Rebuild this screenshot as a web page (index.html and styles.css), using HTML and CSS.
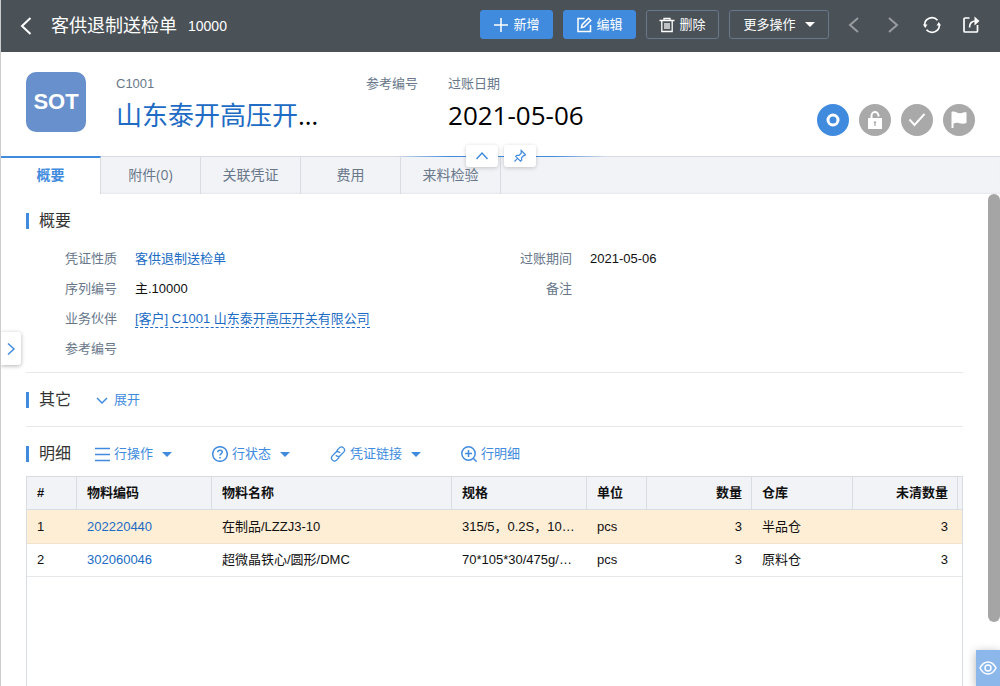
FILE: index.html
```html
<!DOCTYPE html>
<html lang="zh-CN">
<head>
    <meta charset="UTF-8">
    <meta name="viewport" content="width=device-width, initial-scale=1.0">
    <title>客供退制送检单 10000</title>
    <link rel="stylesheet" href="styles.css">
</head>
<body>
    <!-- Top bar -->
    <header class="topbar">
        <button type="button" class="icon-btn back" aria-label="返回">
            <svg width="12" height="18" viewBox="0 0 12 18"><path d="M10.500 1 2 9l8.500 8" /></svg>
        </button>
        <h1 class="title">客供退制送检单</h1>
        <span class="doc-no">10000</span>

        <div class="actions">
            <button type="button" class="btn btn-primary">
                <svg width="16" height="16" viewBox="0 0 16 16"><path d="M8 1v14M1 8h14" /></svg>新增
            </button>
            <button type="button" class="btn btn-primary">
                <svg width="16" height="16" viewBox="0 0 16 16"><path d="M8.500 1.500H2v13h12.500V8M5.500 10.500l.6-2.800 6.400-6.400 2.200 2.200-6.400 6.400z" /></svg>编辑
            </button>
            <button type="button" class="btn">
                <svg width="16" height="16" viewBox="0 0 16 16"><path d="M.5 3.500h15M5 3.500v-2h6v2M2.800 3.500v11h10.400v-11M6 6v6M8 6v6M10 6v6" stroke-width="1.300" /></svg>删除
            </button>
            <button type="button" class="btn btn-more">更多操作<span class="caret"></span></button>
        </div>

        <div class="nav-icons">
            <button type="button" class="icon-btn dim" aria-label="上一张">
                <svg width="16" height="16" viewBox="0 0 16 16"><path d="M12 1 4 8l8 7" /></svg>
            </button>
            <button type="button" class="icon-btn dim" aria-label="下一张">
                <svg width="16" height="16" viewBox="0 0 16 16"><path d="m4 1 8 7-8 7" /></svg>
            </button>
            <button type="button" class="icon-btn" aria-label="刷新">
                <svg width="18" height="18" viewBox="0 0 18 18"><path d="M1.700 9.500A7.300 7.300 0 0 1 14.500 4.200M16.300 8.500A7.300 7.300 0 0 1 3.500 13.800" stroke-width="1.700" /><path class="fill" d="M0 8.500h4.500L2.200 12zM18 9.500h-4.500L15.800 6z" /></svg>
            </button>
            <button type="button" class="icon-btn" aria-label="分享">
                <svg width="18" height="18" viewBox="0 0 18 18"><path d="M7.500 2H3Q2 2 2 3v12q0 1 1 1h11.500q1 0 1-1V9M7.500 11.500C7.500 7 9.500 5 14 5" stroke-width="1.700" /><path class="fill" d="m12.500.5 5 4.500-5 4.500z" /></svg>
            </button>
        </div>
    </header>

    <!-- Document summary -->
    <section class="summary">
        <div class="logo">SOT</div>
        <div class="info partner">
            <div class="info-label">C1001</div>
            <div class="info-value"><a href="#partner">山东泰开高压开关有限公司</a></div>
        </div>
        <div class="info">
            <div class="info-label">参考编号</div>
        </div>
        <div class="info">
            <div class="info-label">过账日期</div>
            <div class="info-value">2021-05-06</div>
        </div>
        <div class="states">
            <span class="state on"><svg width="16" height="16" viewBox="0 0 16 16"><circle cx="8" cy="8" r="5" stroke-width="3" /></svg></span>
            <span class="state"><svg width="16" height="20" viewBox="0 0 16 20"><path d="M4.500 9V6a3.500 3.700 0 0 1 7-.5v1" stroke-width="2" /><path class="fill" fill-rule="evenodd" d="M1 8h14v11H1zM8 11.200a1.200 1.200 0 0 0-.6 2.200V16h1.200v-2.600A1.200 1.200 0 0 0 8 11.200z" /></svg></span>
            <span class="state"><svg width="18" height="16" viewBox="0 0 18 16"><path d="m1.500 7.500 5 5.500 10-11" stroke-width="2" /></svg></span>
            <span class="state"><svg width="18" height="18" viewBox="0 0 18 18"><path class="fill" d="M1.500 1C5-.5 7 2.800 10.500 2.200 13 2 14.500 1 16.500 1.500V12c-3 1-5 .8-7 .2-2.500-.8-4-.4-6 .3V17h-2z" /></svg></span>
        </div>
        <div class="fold">
            <button type="button" aria-label="收起"><svg width="14" height="14" viewBox="0 0 14 14"><path d="M1.500 10 7 4l5.500 6" /></svg></button>
            <button type="button" aria-label="固定"><svg width="14" height="14" viewBox="0 0 14 14"><path d="m8.200 1.500 4.300 4.300-1 .9-.8-.2-2.200 2.300.2 2.300-1.200 1-4.800-4.800 1.100-1 2.200.1 2.300-2.200-.2-.8zM4.800 9.200 1.500 12.500" stroke-width="1.200" /></svg></button>
        </div>
    </section>

    <!-- Tabs -->
    <nav class="tabs">
        <a href="#summary" class="tab active">概要</a>
        <a href="#files" class="tab">附件(0)</a>
        <a href="#related" class="tab">关联凭证</a>
        <a href="#cost" class="tab">费用</a>
        <a href="#inspection" class="tab">来料检验</a>
    </nav>

    <main class="content">
        <!-- Summary section -->
        <section class="block">
            <div class="block-head"><h2>概要</h2></div>
            <div class="fields">
                <dl>
                    <dt>凭证性质</dt><dd><a href="#type">客供退制送检单</a></dd>
                    <dt>序列编号</dt><dd>主.10000</dd>
                    <dt>业务伙伴</dt><dd><a href="#partner" class="dashed">[客户] C1001 山东泰开高压开关有限公司</a></dd>
                    <dt>参考编号</dt><dd></dd>
                </dl>
                <dl>
                    <dt>过账期间</dt><dd>2021-05-06</dd>
                    <dt>备注</dt><dd></dd>
                </dl>
            </div>
        </section>

        <!-- Other section -->
        <section class="block">
            <div class="block-head">
                <h2>其它</h2>
                <button type="button" class="link-btn"><svg width="16" height="16" viewBox="0 0 16 16"><path d="m3 6 5 5 5-5" /></svg>展开</button>
            </div>
        </section>

        <!-- Detail lines -->
        <section class="block detail">
            <div class="block-head">
                <h2>明细</h2>
                <div class="tools">
                    <button type="button" class="link-btn"><svg width="16" height="16" viewBox="0 0 16 16"><path d="M1 2.500h15M1 8.500h15M1 14.500h15" /></svg>行操作<span class="caret"></span></button>
                    <button type="button" class="link-btn"><svg width="16" height="16" viewBox="0 0 16 16"><circle cx="8" cy="8" r="7.300" /><path d="M5.800 6.300c0-3 4.500-2.700 4.500-.2C10.300 7.700 8 7.700 8 9.600M8 11v1.500" /></svg>行状态<span class="caret"></span></button>
                    <button type="button" class="link-btn"><svg width="16" height="16" viewBox="0 0 16 16"><path d="m6.600 4.700 2.800-2.800c2.700-2.600 6.900 1.200 4.300 4.200l-3.500 3.600c-1.400 1.400-3.600.9-4.300-.8M9.400 11.300l-2.800 2.800c-2.700 2.600-6.900-1.200-4.300-4.200l3.500-3.600c1.400-1.400 3.600-.9 4.300.8" stroke-width="1.300" /></svg>凭证链接<span class="caret"></span></button>
                    <button type="button" class="link-btn"><svg width="16" height="16" viewBox="0 0 16 16"><circle cx="7.500" cy="7.500" r="6.700" /><path d="M7.500 4v7M4 7.500h7M12.200 12.200l3.500 3.500" /></svg>行明细</button>
                </div>
            </div>
            <div class="grid">
                <table>
                    <colgroup>
                        <col class="w-no"><col class="w-code"><col><col class="w-code"><col class="w-unit"><col class="w-qty"><col class="w-store"><col class="w-qty"><col class="w-end">
                    </colgroup>
                    <thead>
                        <tr>
                            <th>#</th>
                            <th>物料编码</th>
                            <th>物料名称</th>
                            <th>规格</th>
                            <th>单位</th>
                            <th class="num">数量</th>
                            <th>仓库</th>
                            <th class="num">未清数量</th>
                            <th class="end"></th>
                        </tr>
                    </thead>
                    <tbody>
                        <tr class="selected">
                            <td>1</td>
                            <td><a href="#202220440">202220440</a></td>
                            <td>在制品/LZZJ3-10</td>
                            <td>315/5，0.2S，10P10</td>
                            <td>pcs</td>
                            <td class="num">3</td>
                            <td>半品仓</td>
                            <td class="num">3</td>
                            <td class="end"></td>
                        </tr>
                        <tr>
                            <td>2</td>
                            <td><a href="#302060046">302060046</a></td>
                            <td>超微晶铁心/圆形/DMC</td>
                            <td>70*105*30/475g/DMC</td>
                            <td>pcs</td>
                            <td class="num">3</td>
                            <td>原料仓</td>
                            <td class="num">3</td>
                            <td class="end"></td>
                        </tr>
                    </tbody>
                </table>
            </div>
        </section>

        <div class="scroll-thumb"></div>
    </main>

    <button type="button" class="side-toggle" aria-label="展开侧栏"><svg width="12" height="14" viewBox="0 0 12 14"><path d="m3 1.500 6 5.500-6 5.500" /></svg></button>
    <button type="button" class="eye" aria-label="预览"><svg width="18" height="14" viewBox="0 0 18 14"><path d="M1 7c4-8 12-8 16 0-4 8-12 8-16 0z" /><circle cx="9" cy="7" r="3" /></svg></button>
</body>
</html>
```
FILE: styles.css
```css
* {
    box-sizing: border-box;
}

body {
    margin: 0;
    min-height: 100vh;
    display: flex;
    flex-direction: column;
    position: relative;
    border-left: 1px solid #ccc;
    background: #fff;
    color: #111;
    font: 13px/20px "Liberation Sans", "Noto Sans CJK SC", sans-serif;
}

a {
    color: #206bc4;
    text-decoration: none;
}

button {
    font: inherit;
    cursor: pointer;
}

svg {
    display: block;
    flex: none;
    fill: none;
    stroke: currentColor;
    stroke-width: 1.5;
}

svg .fill {
    fill: currentColor;
    stroke: none;
}

.caret {
    border: 5px solid transparent;
    border-top-color: currentColor;
    border-bottom: 0;
}

/* Top bar */
.topbar {
    display: flex;
    align-items: center;
    height: 52px;
    padding: 0 20px 0 19px;
    background: #4a5157;
    color: #fff;
}

.icon-btn {
    padding: 0;
    border: 0;
    background: none;
    color: #fff;
}

.icon-btn svg {
    stroke-width: 2;
}

.icon-btn.dim {
    color: #999c9f;
}

.title {
    margin: 0 11px 0 19px;
    font-size: 18px;
    font-weight: 400;
    line-height: 24px;
}

.doc-no {
    font-size: 14px;
}

.actions {
    display: flex;
    gap: 10px;
    margin-left: auto;
    padding-bottom: 3px;
}

.btn {
    display: flex;
    align-items: center;
    justify-content: center;
    gap: 4px;
    width: 73px;
    height: 29px;
    padding: 0;
    border: 1px solid #66788a;
    border-radius: 3px;
    background: transparent;
    color: #fff;
}

.btn-primary {
    border-color: #418bde;
    background: #418bde;
}

.btn-more {
    width: 100px;
    gap: 9px;
}

.nav-icons {
    display: flex;
    gap: 21px;
    margin-left: 16px;
    padding-bottom: 2px;
}

.nav-icons .icon-btn {
    display: flex;
    align-items: center;
    justify-content: center;
    width: 18px;
}

/* Document summary */
.summary {
    display: flex;
    gap: 30px;
    position: relative;
    height: 104px;
    padding: 20px 25px;
}

.logo {
    width: 60px;
    height: 60px;
    border-radius: 10px;
    background: #6790cd;
    color: #fff;
    font-size: 22px;
    font-weight: 700;
    line-height: 60px;
    text-align: center;
}

.info-label {
    height: 24px;
    line-height: 24px;
    color: #68778a;
}

.info-value {
    overflow: hidden;
    color: #000;
    font-family: "Open Sans", "Noto Sans CJK SC", sans-serif;
    font-size: 26px;
    line-height: 38px;
    text-overflow: ellipsis;
    white-space: nowrap;
}

.partner {
    width: 220px;
}

.states {
    display: flex;
    align-items: center;
    gap: 10px;
    margin-left: auto;
    padding-top: 32px;
}

.state {
    display: flex;
    align-items: center;
    justify-content: center;
    width: 32px;
    height: 32px;
    border-radius: 50%;
    background: #a9a9a9;
    color: #fff;
}

.state.on {
    background: #418bde;
}

/* Fold and pin buttons sit over the tab border */
.fold {
    display: flex;
    justify-content: center;
    gap: 6px;
    position: absolute;
    z-index: 1;
    bottom: -11px;
    left: calc(50% - 105px);
    width: 210px;
    background: linear-gradient(90deg, transparent, #418bde 25%, #418bde 75%, transparent) center / 100% 1px no-repeat;
}

.fold button {
    display: flex;
    align-items: center;
    justify-content: center;
    width: 32px;
    height: 22px;
    padding: 0;
    border: 0;
    border-radius: 3px;
    background: #fff;
    box-shadow: 0 1px 4px rgba(0, 0, 0, 0.2);
    color: #418bde;
}

/* Tabs */
.tabs {
    display: flex;
    height: 38px;
    border-top: 1px solid #d8dbe6;
    background: #f2f3f7;
    box-shadow: inset 0 -2px 2px -1px #e6e7ea;
}

.tab {
    width: 100px;
    border-right: 1px solid #d8dbe2;
    color: #68778a;
    font-family: "Open Sans", "Noto Sans CJK SC", sans-serif;
    font-size: 14px;
    line-height: 36px;
    text-align: center;
}

.tab.active {
    margin-top: -1px;
    border-top: 2px solid #418bde;
    background: #fff;
    color: #418bde;
    font-weight: 700;
    line-height: 34px;
}

/* Content */
.content {
    display: flex;
    flex: 1;
    flex-direction: column;
    position: relative;
    padding: 0 37px 0 25px;
}

.block {
    border-bottom: 1px solid #e6e8eb;
}

.block-head {
    display: flex;
    align-items: center;
    height: 53px;
}

.block-head h2 {
    margin: 0;
    padding-left: 10px;
    border-left: 3px solid #418bde;
    color: #333;
    font-size: 16px;
    font-weight: 400;
    line-height: 16px;
}

.link-btn {
    display: flex;
    align-items: center;
    gap: 4px;
    margin-left: 23px;
    padding: 0;
    border: 0;
    background: none;
    color: #418bde;
}

.link-btn .caret {
    margin-left: 5px;
}

.fields {
    display: grid;
    grid-template-columns: 1fr 1fr;
    padding: 0 27px 8px 0;
}

.fields dl {
    display: grid;
    grid-template-columns: 91px 1fr;
    column-gap: 18px;
    grid-auto-rows: 30px;
    margin: 0;
    margin-top: -3px;
    line-height: 30px;
}

.fields dt {
    color: #68778a;
    text-align: right;
}

.fields dd {
    margin: 0;
}

.dashed {
    padding-bottom: 1px;
    border-bottom: 1px dashed #206bc4;
}

.detail {
    display: flex;
    flex: 1;
    flex-direction: column;
    border-bottom: 0;
}

.detail .block-head {
    height: 49px;
    padding-top: 5px;
}

.tools {
    display: flex;
    gap: 40px;
    margin-left: 23px;
}

.tools .link-btn {
    margin-left: 0;
}

/* Lines table */
.grid {
    flex: 1;
    border: 1px solid #d8dce3;
    border-bottom: 0;
}

table {
    width: 100%;
    table-layout: fixed;
    border-collapse: separate;
    border-spacing: 0;
}

.w-no { width: 50px; }
.w-code { width: 135px; }
.w-unit { width: 60px; }
.w-qty { width: 105px; }
.w-store { width: 101px; }
.w-end { width: 4px; }

th, td {
    height: 33px;
    padding: 0 10px;
    overflow: hidden;
    border-bottom: 1px solid #e6e8eb;
    text-align: left;
    text-overflow: ellipsis;
    white-space: nowrap;
}

th {
    padding-right: 9px;
    border-right: 1px solid #d8dce3;
    border-bottom-color: #d8dce3;
    background: #f2f3f7;
    font-weight: 700;
}

.num {
    text-align: right;
}

.end {
    padding: 0;
    border-right: 0;
}

.selected td {
    height: 34px;
    border-bottom-color: #f0e2cc;
    background: #ffeed6;
}

.scroll-thumb {
    position: absolute;
    top: 0;
    right: 0;
    width: 12px;
    height: 87%;
    border-radius: 6px;
    background: #a5a5a5;
}

.side-toggle {
    display: flex;
    align-items: center;
    justify-content: center;
    position: absolute;
    top: 332px;
    left: 0;
    width: 20px;
    height: 33px;
    padding: 0;
    border: 0;
    border-radius: 0 3px 3px 0;
    background: #fff;
    box-shadow: 0 1px 4px rgba(0, 0, 0, 0.3);
    color: #418bde;
}

.eye {
    display: flex;
    align-items: center;
    justify-content: center;
    position: absolute;
    right: 0;
    bottom: 0;
    width: 24px;
    height: 36px;
    padding: 0;
    border: 0;
    background: #8bb7ea;
    box-shadow: 0 2px 10px rgba(0, 0, 0, 0.3);
    color: #fff;
}
```
